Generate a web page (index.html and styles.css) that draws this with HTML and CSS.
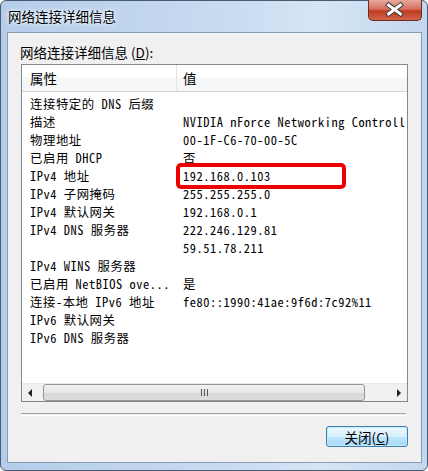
FILE: index.html
```html
<!DOCTYPE html>
<html lang="zh-CN">
<head>
    <meta charset="UTF-8">
    <title>网络连接详细信息</title>
    <link rel="stylesheet" href="styles.css">
</head>
<body>
    <div class="window">
        <div class="titlebar">
            <span class="title">网络连接详细信息</span>
            <div class="close">
                <svg width="54" height="21" viewBox="0 0 54 21">
                    <path d="M21 6 L33 15 M33 6 L21 15" stroke="#3a3a3a" stroke-width="5" stroke-linecap="square"/>
                    <path d="M21 6 L33 15 M33 6 L21 15" stroke="#ffffff" stroke-width="3" stroke-linecap="square"/>
                </svg>
            </div>
        </div>

        <div class="client">
            <div class="label">网络连接详细信息 (<u>D</u>):</div>

            <div class="list">
                <div class="header">
                    <div class="hcol k">属性</div>
                    <div class="hcol v">值</div>
                </div>
                <div class="rows">
                    <div class="row"><span class="k">连接特定的 DNS 后缀</span><span class="v"></span></div>
                    <div class="row"><span class="k">描述</span><span class="v">NVIDIA nForce Networking Controll</span></div>
                    <div class="row"><span class="k">物理地址</span><span class="v">00-1F-C6-70-00-5C</span></div>
                    <div class="row"><span class="k">已启用 DHCP</span><span class="v">否</span></div>
                    <div class="row"><span class="k">IPv4 地址</span><span class="v">192.168.0.103</span><span class="mark"></span></div>
                    <div class="row"><span class="k">IPv4 子网掩码</span><span class="v">255.255.255.0</span></div>
                    <div class="row"><span class="k">IPv4 默认网关</span><span class="v">192.168.0.1</span></div>
                    <div class="row"><span class="k">IPv4 DNS 服务器</span><span class="v">222.246.129.81</span></div>
                    <div class="row"><span class="k"></span><span class="v">59.51.78.211</span></div>
                    <div class="row"><span class="k">IPv4 WINS 服务器</span><span class="v"></span></div>
                    <div class="row"><span class="k">已启用 NetBIOS ove...</span><span class="v">是</span></div>
                    <div class="row"><span class="k">连接-本地 IPv6 地址</span><span class="v">fe80::1990:41ae:9f6d:7c92%11</span></div>
                    <div class="row"><span class="k">IPv6 默认网关</span><span class="v"></span></div>
                    <div class="row"><span class="k">IPv6 DNS 服务器</span><span class="v"></span></div>
                </div>
                <div class="hscroll">
                    <div class="arrow left"></div>
                    <div class="thumb"><span class="grip"></span></div>
                    <div class="track"></div>
                    <div class="arrow right"></div>
                </div>
            </div>

            <div class="sep"></div>

            <div class="actions">
                <button class="btn">关闭(<u>C</u>)</button>
            </div>
        </div>
    </div>
</body>
</html>
```

FILE: styles.css
```css
body {
    margin: 0;
    font-family: "Noto Sans CJK SC", sans-serif;
}
.window {
    width: 428px;
    height: 471px;
    box-sizing: border-box;
    border: 1px solid #4a5a70;
    border-radius: 6px;
    background: linear-gradient(to right, #b4cdea, #c9dcf1 55%, #d6e5f5 75%, #c2d7ee);
    display: flex;
    flex-direction: column;
}
.titlebar {
    height: 31px;
    display: flex;
    align-items: flex-start;
}
.title {
    margin: 6px 0 0 7px;
    font-size: 13.5px;
    line-height: 18px;
    color: #000;
    text-shadow: 0 0 6px #fff, 0 0 3px #fff;
}
.close {
    margin-left: auto;
    margin-right: 5px;
    width: 54px;
    height: 21px;
    margin-top: -1px;
    box-sizing: border-box;
    border: 1px solid #6b2b22;
    border-top: none;
    border-radius: 0 0 5px 5px;
    background: linear-gradient(#e9a99c, #d3705e 45%, #c23a21 55%, #d0654a);
    display: flex;
}
.close svg {
    margin: -1px 0 0 -1px;
}
.client {
    flex: 1;
    margin: 0 5px 7px 6px;
    border: 1px solid #8a9cb0;
    background: #f0f0f0;
    display: flex;
    flex-direction: column;
    padding: 10px 13px 0 13px;
}
.label {
    font-size: 13.5px;
    line-height: 18px;
    margin-bottom: 3px;
    margin-left: -1px;
}
.list {
    height: 338px;
    box-sizing: border-box;
    border: 1px solid #828790;
    background: #fff;
    display: flex;
    flex-direction: column;
    overflow: hidden;
}
.header {
    height: 26px;
    flex-shrink: 0;
    display: flex;
    border-bottom: 1px solid #d5d5d5;
    background: linear-gradient(#fff 45%, #f6f7f8 50%, #f4f5f6);
    font-size: 13.5px;
}
.hcol {
    line-height: 26px;
}
.hcol.k {
    width: 146px;
    padding-left: 8px;
    border-right: 1px solid #e5e5e5;
}
.hcol.v {
    padding-left: 6px;
}
.rows {
    flex: 1;
    padding-top: 3px;
    font-family: "Noto Sans Mono CJK SC", "Liberation Mono", monospace;
    font-size: 12.4px;
    letter-spacing: 0.55px;
}
.row {
    position: relative;
    height: 18px;
    line-height: 18px;
    display: flex;
    white-space: nowrap;
}
.row .k {
    width: 146px;
    padding-left: 8px;
    flex-shrink: 0;
}
.row .v {
    padding-left: 7px;
    overflow: hidden;
}
.mark {
    position: absolute;
    left: 154px;
    top: -4px;
    width: 170px;
    height: 26px;
    box-sizing: border-box;
    border: 4px solid #ee0000;
    border-radius: 5px;
}
.hscroll {
    height: 17px;
    flex-shrink: 0;
    display: flex;
    background: #f0f0f0;
    border-top: 1px solid #e8e8e8;
}
.arrow {
    width: 21px;
    position: relative;
}
.arrow.left::after,
.arrow.right::after {
    content: "";
    position: absolute;
    top: 5px;
    border: 4px solid transparent;
}
.arrow.left::after {
    left: 6px;
    border-right: 4px solid #222;
    border-left-width: 0;
}
.arrow.right::after {
    left: 11px;
    border-left: 4px solid #222;
    border-right-width: 0;
}
.thumb {
    width: 322px;
    box-sizing: border-box;
    border: 1px solid #979797;
    border-radius: 3px;
    background: linear-gradient(#f3f3f3, #e6e6e6 50%, #d7d7d7 51%, #dcdcdc);
    display: flex;
    justify-content: center;
    align-items: center;
}
.grip {
    width: 7px;
    height: 7px;
    background: repeating-linear-gradient(to right, #555 0 1px, transparent 1px 3px);
}
.track {
    flex: 1;
}
.sep {
    margin-top: 11px;
    margin-right: 2px;
    height: 1px;
    border-top: 1px solid #a0a0a0;
    border-bottom: 1px solid #fff;
}
.actions {
    display: flex;
    justify-content: flex-end;
    margin-top: 10px;
}
.btn {
    width: 82px;
    height: 21px;
    padding: 0;
    border: 1px solid #3c7fb1;
    border-radius: 3px;
    background: linear-gradient(#eaf6fd, #d9f0fc 50%, #bee6fd 51%, #a7d9f5);
    box-shadow: inset 0 0 0 1px #c4ecfd;
    font-family: "Noto Sans CJK SC", sans-serif;
    font-size: 13.5px;
    line-height: 18px;
    color: #000;
}
```
